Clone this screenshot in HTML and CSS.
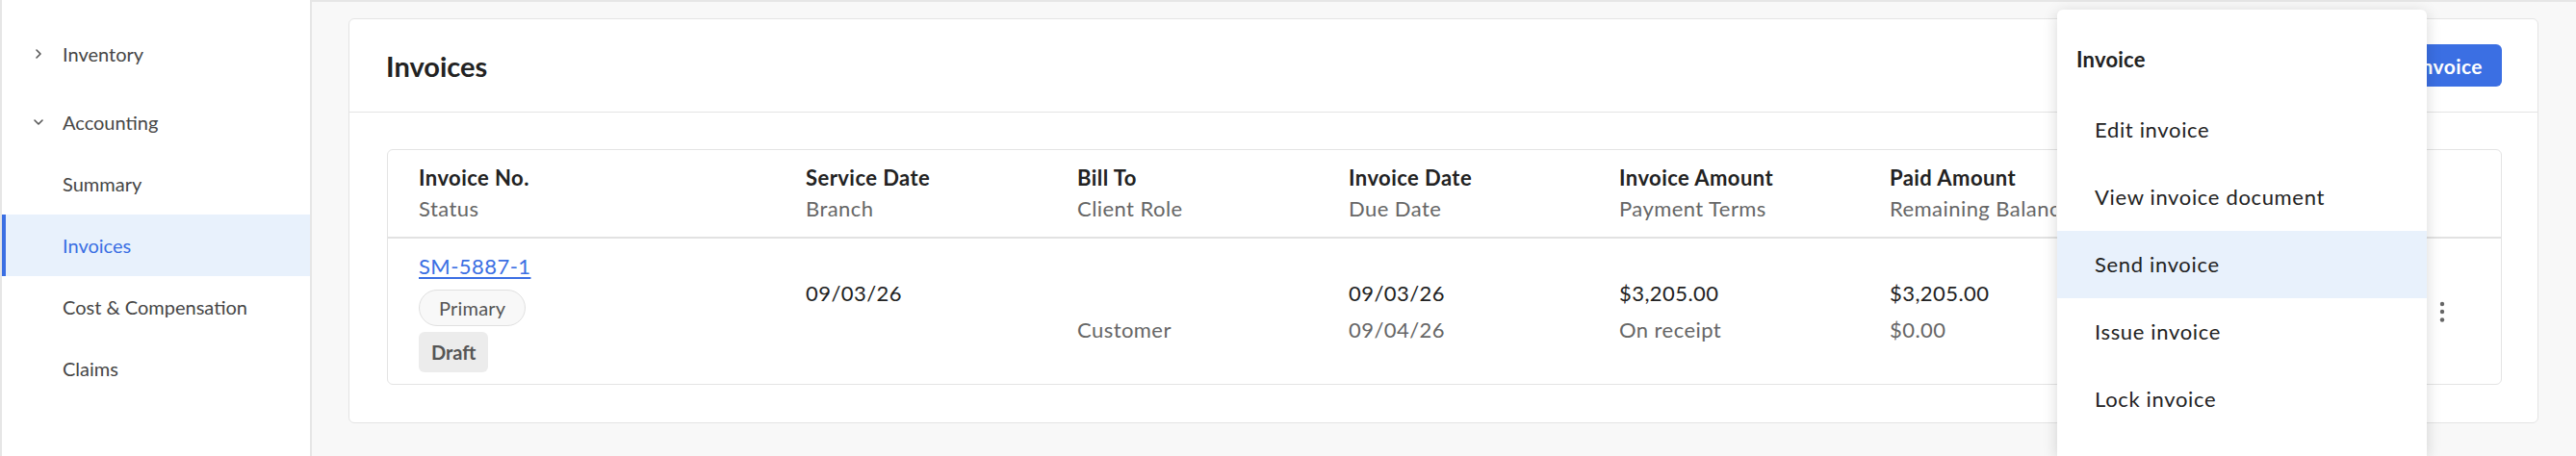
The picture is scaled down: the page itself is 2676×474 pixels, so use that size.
FILE: index.html
```html
<!DOCTYPE html>
<html lang="en">
<head>
    <meta charset="UTF-8">
    <meta name="viewport" content="width=device-width, initial-scale=1.0">
    <title>Invoices</title>
    <link rel="stylesheet" href="styles.css">
</head>
<body>
    <div class="app">
        <!--사이드바-->
        <aside class="sidebar">
            <div class="navGroup">
                <div class="navHead">
                    <svg class="chevron chevronRight" viewBox="0 0 12 12"><path d="M2 4 L6 8 L10 4"/></svg>
                    <span>Inventory</span>
                </div>
            </div>
            <div class="navGroup">
                <div class="navHead">
                    <svg class="chevron" viewBox="0 0 12 12"><path d="M2 4 L6 8 L10 4"/></svg>
                    <span>Accounting</span>
                </div>
                <a class="navItem">Summary</a>
                <a class="navItem active">Invoices</a>
                <a class="navItem">Cost &amp; Compensation</a>
                <a class="navItem">Claims</a>
            </div>
        </aside>

        <main class="main">
            <section class="card">
                <header class="cardHeader">
                    <h1 class="cardTitle">Invoices</h1>
                    <button class="primaryBtn">New Invoice</button>
                </header>
                <div class="cardBody">
                    <div class="invoiceTable">
                        <div class="tableRow tableHead">
                            <div class="cell"><span class="mainLine">Invoice No.</span><span class="subLine">Status</span></div>
                            <div class="cell"><span class="mainLine">Service Date</span><span class="subLine">Branch</span></div>
                            <div class="cell"><span class="mainLine">Bill To</span><span class="subLine">Client Role</span></div>
                            <div class="cell"><span class="mainLine">Invoice Date</span><span class="subLine">Due Date</span></div>
                            <div class="cell"><span class="mainLine">Invoice Amount</span><span class="subLine">Payment Terms</span></div>
                            <div class="cell"><span class="mainLine">Paid Amount</span><span class="subLine clipped">Remaining Balance</span></div>
                            <div class="cell"></div>
                            <div class="cell"></div>
                        </div>
                        <div class="tableRow tableBody">
                            <div class="cell invoiceCell">
                                <a class="invoiceLink">SM-5887-1</a>
                                <span class="pill">Primary</span>
                                <span class="statusTag">Draft</span>
                            </div>
                            <div class="cell"><span class="mainLine">09/03/26</span><span class="subLine"></span></div>
                            <div class="cell"><span class="mainLine"></span><span class="subLine">Customer</span></div>
                            <div class="cell"><span class="mainLine">09/03/26</span><span class="subLine">09/04/26</span></div>
                            <div class="cell"><span class="mainLine">$3,205.00</span><span class="subLine">On receipt</span></div>
                            <div class="cell"><span class="mainLine">$3,205.00</span><span class="subLine">$0.00</span></div>
                            <div class="cell"></div>
                            <div class="cell actionCell">
                                <svg class="kebab" viewBox="0 0 6 22"><circle cx="3" cy="3" r="2.2"/><circle cx="3" cy="11" r="2.2"/><circle cx="3" cy="19.5" r="2.2"/></svg>
                            </div>
                        </div>
                    </div>
                </div>
            </section>
        </main>

        <!--드롭다운 메뉴-->
        <div class="dropdown">
            <p class="dropdownTitle">Invoice</p>
            <a class="dropdownItem">Edit invoice</a>
            <a class="dropdownItem">View invoice document</a>
            <a class="dropdownItem hover">Send invoice</a>
            <a class="dropdownItem">Issue invoice</a>
            <a class="dropdownItem">Lock invoice</a>
        </div>
    </div>
</body>
</html>
```

FILE: styles.css
```css
*{
    margin: 0; padding: 0;
    box-sizing: border-box;
}
html, body{
    height: 100%;
}
body{
    font-family: "Lato", "Liberation Sans", sans-serif;
    color: #222;
    background-color: #f8f8f8;
    overflow: hidden;
}
a{
    cursor: pointer;
}
.app{
    display: flex;
    height: 100%;
    position: relative;
}

/* sidebar */
.sidebar{
    width: 324px;
    flex-shrink: 0;
    background-color: white;
    border-left: 2px solid #e6e6e6;
    border-right: 2px solid #e6e6e6;
    padding-top: 24px;
    font-size: 20px;
    color: #464646;
}
.navGroup{
    display: flex;
    flex-direction: column;
    margin-bottom: 7px;
}
.navHead{
    height: 64px;
    display: flex;
    align-items: center;
    gap: 19px;
    padding-left: 32px;
}
.chevron{
    width: 12px;
    height: 12px;
    fill: none;
    stroke: #555;
    stroke-width: 1.6;
    stroke-linecap: round;
    stroke-linejoin: round;
}
.chevronRight{
    transform: rotate(-90deg);
}
.navItem{
    height: 64px;
    line-height: 64px;
    padding-left: 63px;
}
.navItem.active{
    background-color: #e8f1fc;
    color: #3b6fe3;
    border-left: 4px solid #3b6fe3;
    padding-left: 59px;
}

/* main */
.main{
    flex: 1;
    border-top: 2px solid #e6e6e6;
    padding: 17px 39px 0 38px;
}
.card{
    background-color: white;
    border: 1px solid #e4e4e4;
    border-radius: 6px;
}
.cardHeader{
    height: 97px;
    border-bottom: 1px solid #e4e4e4;
    display: flex;
    align-items: center;
    justify-content: space-between;
    padding: 0 37px 0 38px;
}
.cardTitle{
    font-size: 29px;
    font-weight: 700;
    color: #222;
}
.primaryBtn{
    height: 44px;
    padding: 0 20px;
    border: 0;
    border-radius: 6px;
    background-color: #3b6fe3;
    color: white;
    font-family: inherit;
    font-size: 21px;
    font-weight: 700;
    letter-spacing: 0.02em;
}
.cardBody{
    padding: 38px 37px 39px 39px;
}

/* table */
.invoiceTable{
    border: 1px solid #e4e4e4;
    border-radius: 6px;
    font-size: 22px;
    letter-spacing: 0.02em;
}
.tableRow{
    display: grid;
    grid-template-columns: 402px 282px 282px 281px 281px 281px 281px 1fr;
}
.tableHead{
    height: 92px;
    border-bottom: 2px solid #e2e2e2;
    line-height: 32px;
}
.tableHead .mainLine{
    font-weight: 700;
    color: #222;
}
.tableBody{
    height: 151px;
    line-height: 38px;
}
.cell{
    display: flex;
    flex-direction: column;
    justify-content: center;
    align-items: flex-start;
    padding-left: 32px;
    white-space: nowrap;
}
.mainLine{
    display: block;
    min-height: 1lh;
    color: #222;
}
.subLine{
    display: block;
    min-height: 1lh;
    color: #666;
}
.clipped{
    max-width: 173px;
    overflow: hidden;
}
.invoiceLink{
    color: #3b6fe3;
    text-decoration: underline;
    text-underline-offset: 3px;
    line-height: 32px;
}
.pill{
    margin-top: 8px;
    height: 38px;
    line-height: 36px;
    padding: 0 20px;
    border: 1px solid #e0e0e0;
    border-radius: 19px;
    background-color: #f8f8f8;
    color: #555;
    font-size: 20px;
    letter-spacing: 0.01em;
}
.statusTag{
    margin-top: 6px;
    height: 42px;
    line-height: 42px;
    padding: 0 13px;
    border-radius: 6px;
    background-color: #ececec;
    color: #555;
    font-size: 20px;
    font-weight: 700;
    letter-spacing: 0;
}
.actionCell{
    padding-left: 41px;
}
.kebab{
    width: 6px;
    height: 22px;
    fill: #666;
}

/* dropdown */
.dropdown{
    position: absolute;
    left: 2137px;
    top: 10px;
    width: 384px;
    height: 464px;
    background-color: white;
    border-radius: 6px 6px 0 0;
    box-shadow: 0 3px 16px rgba(0, 0, 0, 0.16);
    font-size: 22px;
    letter-spacing: 0.03em;
}
.dropdownTitle{
    padding: 32px 20px 18px;
    line-height: 40px;
    font-weight: 700;
    letter-spacing: 0.01em;
    color: #222;
}
.dropdownItem{
    display: block;
    height: 70px;
    line-height: 70px;
    padding-left: 39px;
    color: #222;
}
.dropdownItem.hover{
    background-color: #e8f1fc;
}
```
